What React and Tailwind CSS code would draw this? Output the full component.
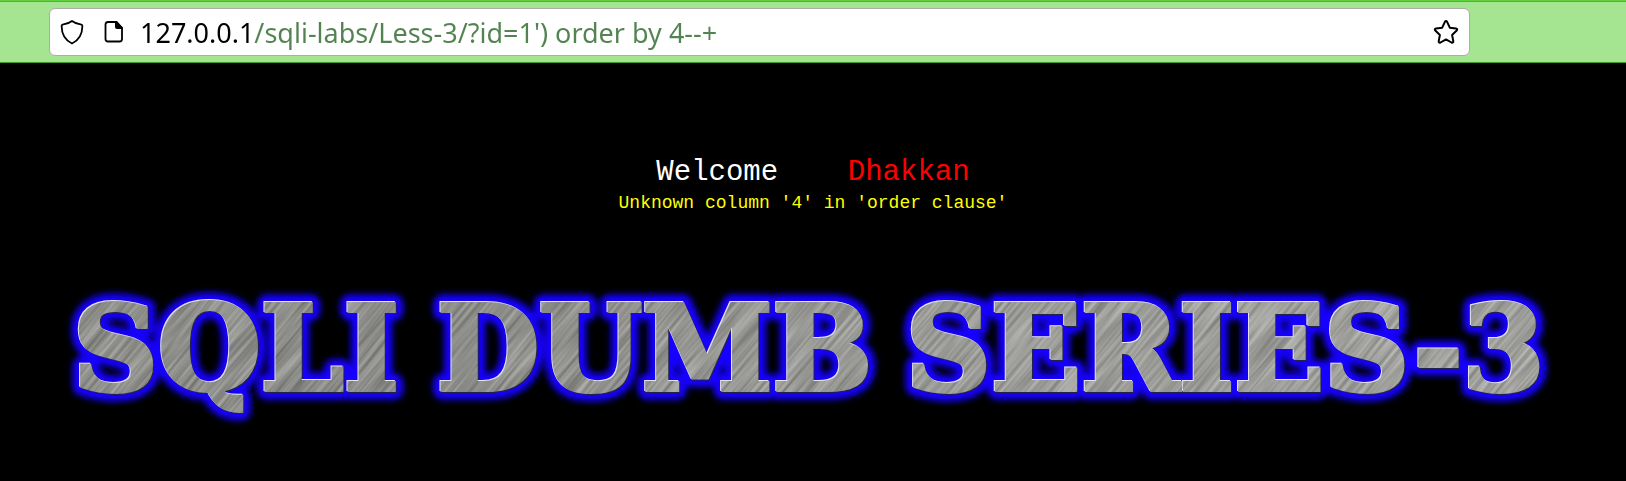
const words = [
  { text: "SQLI", x: 73 },
  { text: "DUMB", x: 437 },
  { text: "SERIES-3", x: 906 },
];

function Words(props) {
  return words.map((w) => (
    <text key={w.text} x={w.x} y="111" {...props}>
      {w.text}
    </text>
  ));
}

function Banner() {
  return (
    <svg
      viewBox="0 0 1626 160"
      role="img"
      aria-label="SQLI DUMB SERIES-3"
      className="block w-full [font-family:'DejaVu_Serif',serif] text-[118px] font-bold"
    >
      <defs>
        <linearGradient id="steel" x1="0" y1="0" x2="1626" y2="0" gradientUnits="userSpaceOnUse">
          <stop offset="0" stopColor="#8c8c89" />
          <stop offset=".3" stopColor="#888885" />
          <stop offset=".45" stopColor="#979794" />
          <stop offset="1" stopColor="#a5a5a2" />
        </linearGradient>
        <filter id="glow" x="-5%" y="-20%" width="110%" height="140%">
          <feGaussianBlur stdDeviation="3" />
        </filter>
        <filter id="brushed" x="0" y="0" width="100%" height="100%" colorInterpolationFilters="sRGB">
          <feTurbulence type="fractalNoise" baseFrequency="0.012 0.3" numOctaves="2" seed="4" />
          <feColorMatrix values="1.3 0 0 0 -0.06  1.3 0 0 0 -0.06  1.3 0 0 0 -0.08  0 0 0 0 0.28" />
        </filter>
        <mask id="letters" maskUnits="userSpaceOnUse" x="0" y="0" width="1626" height="160">
          <Words fill="#fff" stroke="#fff" strokeWidth="4" />
        </mask>
      </defs>
      <g filter="url(#glow)">
        <Words fill="#1400ff" stroke="#1400ff" strokeWidth="19" strokeLinejoin="round" />
      </g>
      <g transform="translate(1 1)">
        <Words fill="#22224a" stroke="#22224a" strokeWidth="4" />
      </g>
      <g transform="translate(-1 -1)">
        <Words fill="#e6e6f4" stroke="#e6e6f4" strokeWidth="4" />
      </g>
      <g mask="url(#letters)">
        <rect width="1626" height="160" fill="url(#steel)" />
        <rect x="-100" y="-900" width="1900" height="1900" filter="url(#brushed)" transform="rotate(-50 813 80)" />
      </g>
    </svg>
  );
}

export default function App() {
  return (
    <div className="min-h-screen bg-black">
      <header className="border-t border-[#5fd03c]">
        <div className="border-t border-b border-t-[#7f8f7a] border-b-[#3f9a2c] bg-[#a5e591] pt-1.5 pb-1.5 pl-[49px] pr-[156px]">
          <div className="flex h-12 items-center rounded-md border border-[#acacac] bg-white pl-2.5 pr-2.5">
            <button type="button" aria-label="Tracking protection" className="shrink-0">
              <svg width="24" height="26" viewBox="0 0 24 26" fill="none" stroke="#000" strokeWidth="1.8" strokeLinejoin="round">
                <path d="M12 2 C9.5 4 6 5.2 2.6 5.6 C1.9 5.7 1.6 6.2 1.6 7 C1.7 14.500 4.500 21 12 24.500 C19.500 21 22.300 14.500 22.400 7 C22.400 6.200 22.100 5.700 21.400 5.600 C18 5.200 14.500 4 12 2 Z" />
              </svg>
            </button>
            <button type="button" aria-label="Site information" className="ml-5 shrink-0">
              <svg width="20" height="24" viewBox="0 0 20 24">
                <path d="M4 2 H12.500 L18 8 V19 Q18 21.500 15.500 21.500 H4 Q1.500 21.500 1.500 19 V4.500 Q1.500 2 4 2 Z" fill="none" stroke="#000" strokeWidth="1.8" />
                <path d="M11 1.500 H13 L18.800 7.500 V9 H13 Q11 9 11 7 Z" fill="#000" />
              </svg>
            </button>
            <input
              type="text"
              aria-label="Address"
              defaultValue="127.0.0.1/sqli-labs/Less-3/?id=1') order by 4--+"
              className="ml-4 h-11 min-w-0 flex-1 bg-[linear-gradient(to_right,#000_113px,#538351_113px)] bg-clip-text [font-family:'Noto_Sans',sans-serif] text-[27px] text-transparent outline-none"
            />
            <button type="button" aria-label="Bookmark this page" className="shrink-0">
              <svg width="26" height="26" viewBox="0 0 26 26" fill="none" stroke="#000" strokeWidth="2" strokeLinejoin="round">
                <path d="M11.900 2.800 Q13 1 14.100 2.800 L16.800 8.700 L23 9.500 Q25 10 23.700 11.600 L19.100 15.900 L20.300 22.200 Q20.400 24.200 18.500 23.500 L13 20.400 L7.500 23.500 Q5.600 24.200 5.700 22.200 L6.900 15.900 L2.300 11.600 Q1 10 3 9.500 L9.200 8.700 Z" />
              </svg>
            </button>
          </div>
        </div>
      </header>
      <main className="pt-[92px]">
        <div className="text-center [font-family:'Liberation_Mono',monospace]">
          <h1 className="whitespace-pre text-[29px] leading-9 text-white">
            Welcome{"    "}
            <span className="text-[#f00]">Dhakkan</span>
          </h1>
          <p className="text-[18px] leading-6 text-[#ff0]">Unknown column '4' in 'order clause'</p>
        </div>
        <div className="mt-16">
          <Banner />
        </div>
      </main>
    </div>
  );
}
